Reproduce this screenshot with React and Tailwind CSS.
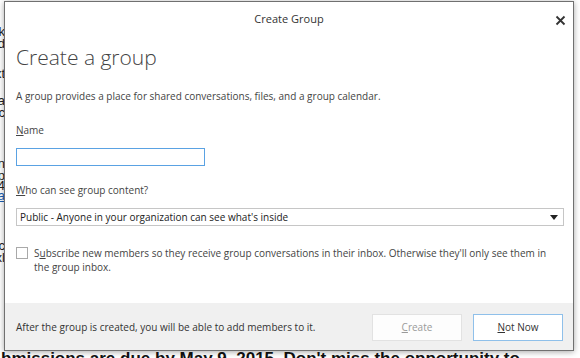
import React from "react";

/* ── Left-edge fragments of the page behind the dialog ── */
const peek = [
  { y: "mt-[26px]", t: "k" },
  { y: "mt-[0px]", t: "d" },
  { y: "mt-[18px]", t: "t" },
  { y: "mt-[15px]", t: "a" },
  { y: "mt-[0px]", t: "c" },
  { y: "mt-[39px]", t: "n" },
  { y: "mt-[0px]", t: "p" },
  { y: "mt-[-2px]", t: "4" },
  { y: "mt-[-2px]", t: "a", link: true },
  { y: "mt-[38px]", t: "c" },
  { y: "mt-[0px]", t: "l" },
];

function CloseIcon() {
  return (
    <svg width="11" height="11" viewBox="0 0 11 11" fill="none" stroke="#333" strokeWidth="1.8">
      <path d="M1.5 1.5l8 8M9.5 1.5l-8 8" />
    </svg>
  );
}

export default function App() {
  const ui = { fontFamily: '"Open Sans", "Noto Sans", sans-serif' };

  return (
    <div className="relative h-[358px] w-[580px] overflow-hidden bg-white">
      {/* ── Page behind ── */}
      <div className="flex h-full flex-col" style={{ fontFamily: '"Liberation Sans", Arial, sans-serif' }}>
        <div className="flex w-[5px] flex-col overflow-hidden text-[13px] leading-[12px] text-[#222]">
          {peek.map((p, i) => (
            <div key={i} className={`${p.y} flex justify-end`}>
              <span className={p.link ? "text-[#1a5fb4] underline" : ""}>{"xx" + p.t}</span>
            </div>
          ))}
        </div>
        <div className="mt-auto mb-[-10px] whitespace-nowrap pl-[1px] text-[17px] font-bold leading-[18px] text-[#111]">
          bmissions are due by May 9, 2015. Don't miss the opportunity to
        </div>
      </div>

      {/* ── Dialog ── */}
      <div
        className="absolute left-[4px] top-[1px] flex h-[350px] w-[570px] flex-col border border-[#707070] bg-white text-[#444] shadow-[0_1px_6px_rgba(0,0,0,0.35)]"
        style={ui}
      >
        <div className="relative flex h-[34px] shrink-0 items-center justify-center text-[11px] text-[#333]">
          Create Group
          <button type="button" className="absolute right-[7px] top-[12px] flex h-[12px] w-[12px] items-center justify-center">
            <CloseIcon />
          </button>
        </div>

        <div className="flex flex-1 flex-col px-[11px]">
          <h1 className="pt-[9px] text-[21px] font-light leading-[24px] text-[#444]">Create a group</h1>

          <p className="mt-[19px] text-[10px] leading-[16px]">
            A group provides a place for shared conversations, files, and a group calendar.
          </p>

          <label className="mt-[18px] text-[10px] leading-[16px]">
            <span className="underline">N</span>ame
          </label>
          <input
            type="text"
            className="mt-[10px] h-[18px] w-[189px] border border-[#5aa2e3] bg-white outline-none"
          />

          <label className="mt-[16px] text-[10px] leading-[16px]">
            <span className="underline">W</span>ho can see group content?
          </label>
          <div className="mt-[10px] flex h-[18px] w-[548px] items-center justify-between border border-[#c6c6c6] bg-white pl-[3px] pr-[5px] text-[10px] text-[#222]">
            <span>Public - Anyone in your organization can see what's inside</span>
            <svg width="8" height="5" viewBox="0 0 8 5">
              <path d="M0 0h8L4 5z" fill="#222" />
            </svg>
          </div>

          <div className="mt-[20px] flex gap-[6px]">
            <div className="mt-[1px] h-[12px] w-[12px] shrink-0 border border-[#a9a9a9] bg-white" />
            <p className="w-[516px] text-[10px] leading-[14px]">
              S<span className="underline">u</span>bscribe new members so they receive group conversations in their inbox. Otherwise they'll only see them in the group inbox.
            </p>
          </div>
        </div>

        <div className="flex h-[47px] shrink-0 items-start bg-[#f0f0f0] pl-[11px] pr-[10px] pt-[11px]">
          <span className="flex h-[27px] flex-1 items-center text-[10px] text-[#333]">
            After the group is created, you will be able to add members to it.
          </span>
          <div className="flex gap-[11px]">
            <button
              type="button"
              className="h-[27px] w-[90px] border border-[#e2e2e2] bg-[#fdfdfd] text-[10px] text-[#9a9a9a]"
            >
              <span className="underline">C</span>reate
            </button>
            <button
              type="button"
              className="h-[27px] w-[90px] border border-[#8fc0ea] bg-white text-[10px] text-[#333]"
            >
              <span className="underline">N</span>ot Now
            </button>
          </div>
        </div>
      </div>
    </div>
  );
}
